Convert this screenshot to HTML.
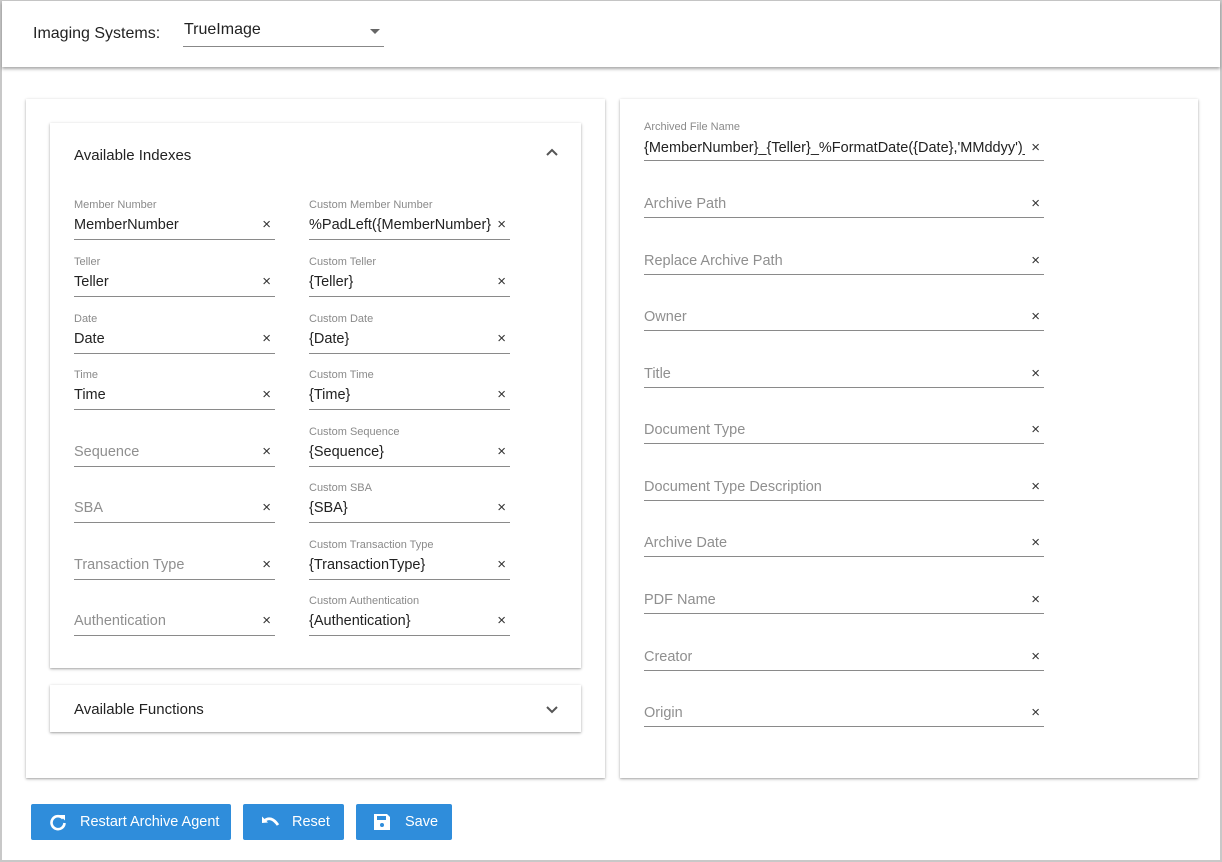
<!DOCTYPE html>
<html><head><meta charset="utf-8"><style>
*{box-sizing:border-box;margin:0;padding:0}
body{width:1222px;height:862px;overflow:hidden;background:#fff;font-family:"Liberation Sans",Arial,sans-serif;position:relative}
.frame{position:absolute;inset:0;border:2px solid #c8c8c8;border-top-width:1px}
.hdr{position:absolute;left:2px;top:1px;width:1218px;height:66px;background:#fff;box-shadow:0 2px 3px rgba(0,0,0,.35)}
.card{position:absolute;background:#fff;box-shadow:0 1px 3px rgba(0,0,0,.3),0 1px 1px rgba(0,0,0,.1)}
.f{position:absolute;height:42px}
.f .l{position:absolute;left:0;top:0;font-size:11px;line-height:12px;color:#8a8a8a;white-space:nowrap}
.f .v{position:absolute;left:0;top:17px;font-size:14.5px;line-height:18px;color:#222;white-space:nowrap;overflow:hidden}
.f .p{color:#8f8f8f}
.f .x{position:absolute;right:4px;top:17px;font-size:15px;line-height:18px;color:#333}
.f .u{position:absolute;left:0;right:0;top:40px;height:1px;background:#8a8a8a}
.btn{position:absolute;top:804px;height:36px;background:#2f8ddb;color:#fff;border-radius:2px;font-size:14.5px;line-height:36px;white-space:nowrap}
.btn svg{position:absolute;top:9px}
</style></head><body>
<div class="frame"></div>
<div class="hdr">
<div style="position:absolute;left:31px;top:24px;font-size:16px;color:#222">Imaging Systems:</div>
<div style="position:absolute;left:182px;top:20px;font-size:16px;color:#222">TrueImage</div>
<div style="position:absolute;left:368px;top:28px;width:0;height:0;border-left:5px solid transparent;border-right:5px solid transparent;border-top:5px solid #666"></div>
<div style="position:absolute;left:181px;top:45px;width:201px;height:1px;background:#888"></div>
</div>

<div class="card" style="left:26px;top:99px;width:579px;height:679px"></div>
<div class="card" style="left:50px;top:123px;width:531px;height:545px">
<div style="position:absolute;left:24px;top:24px;font-size:15px;color:#222">Available Indexes</div>
<svg style="position:absolute;left:495px;top:24px" width="14" height="10"><path d="M2 8 L7 3 L12 8" stroke="#555" stroke-width="2" fill="none"/></svg>
</div>
<div class="card" style="left:50px;top:685px;width:531px;height:47px">
<div style="position:absolute;left:24px;top:16px;font-size:15px;color:#222">Available Functions</div>
<svg style="position:absolute;left:495px;top:19px" width="14" height="10"><path d="M2 3 L7 8 L12 3" stroke="#555" stroke-width="2" fill="none"/></svg>
</div>
<div class="card" style="left:620px;top:99px;width:578px;height:679px"></div>

<!-- left fields -->
<div class="f" style="left:74px;top:199px;width:201px"><div class="l">Member Number</div><div class="v">MemberNumber</div><div class="x">×</div><div class="u"></div></div>
<div class="f" style="left:309px;top:199px;width:201px"><div class="l">Custom Member Number</div><div class="v" style="width:182px">%PadLeft({MemberNumber},</div><div class="x">×</div><div class="u"></div></div>
<div class="f" style="left:74px;top:256px;width:201px"><div class="l">Teller</div><div class="v">Teller</div><div class="x">×</div><div class="u"></div></div>
<div class="f" style="left:309px;top:256px;width:201px"><div class="l">Custom Teller</div><div class="v">{Teller}</div><div class="x">×</div><div class="u"></div></div>
<div class="f" style="left:74px;top:313px;width:201px"><div class="l">Date</div><div class="v">Date</div><div class="x">×</div><div class="u"></div></div>
<div class="f" style="left:309px;top:313px;width:201px"><div class="l">Custom Date</div><div class="v">{Date}</div><div class="x">×</div><div class="u"></div></div>
<div class="f" style="left:74px;top:369px;width:201px"><div class="l">Time</div><div class="v">Time</div><div class="x">×</div><div class="u"></div></div>
<div class="f" style="left:309px;top:369px;width:201px"><div class="l">Custom Time</div><div class="v">{Time}</div><div class="x">×</div><div class="u"></div></div>
<div class="f" style="left:74px;top:426px;width:201px"><div class="v p">Sequence</div><div class="x">×</div><div class="u"></div></div>
<div class="f" style="left:309px;top:426px;width:201px"><div class="l">Custom Sequence</div><div class="v">{Sequence}</div><div class="x">×</div><div class="u"></div></div>
<div class="f" style="left:74px;top:482px;width:201px"><div class="v p">SBA</div><div class="x">×</div><div class="u"></div></div>
<div class="f" style="left:309px;top:482px;width:201px"><div class="l">Custom SBA</div><div class="v">{SBA}</div><div class="x">×</div><div class="u"></div></div>
<div class="f" style="left:74px;top:539px;width:201px"><div class="v p">Transaction Type</div><div class="x">×</div><div class="u"></div></div>
<div class="f" style="left:309px;top:539px;width:201px"><div class="l">Custom Transaction Type</div><div class="v">{TransactionType}</div><div class="x">×</div><div class="u"></div></div>
<div class="f" style="left:74px;top:595px;width:201px"><div class="v p">Authentication</div><div class="x">×</div><div class="u"></div></div>
<div class="f" style="left:309px;top:595px;width:201px"><div class="l">Custom Authentication</div><div class="v">{Authentication}</div><div class="x">×</div><div class="u"></div></div>

<!-- right fields -->
<div class="f" style="left:644px;top:121px;width:400px"><div class="l">Archived File Name</div><div class="v" style="top:18px;width:381px">{MemberNumber}_{Teller}_%FormatDate({Date},'MMddyy')_{Time}</div><div class="x" style="top:18px">×</div><div class="u" style="top:39px"></div></div>
<div class="f" style="left:644px;top:178px;width:400px"><div class="v p" style="top:17px">Archive Path</div><div class="x">×</div><div class="u" style="top:39px"></div></div>
<div class="f" style="left:644px;top:235px;width:400px"><div class="v p">Replace Archive Path</div><div class="x">×</div><div class="u" style="top:39px"></div></div>
<div class="f" style="left:644px;top:291px;width:400px"><div class="v p">Owner</div><div class="x">×</div><div class="u" style="top:39px"></div></div>
<div class="f" style="left:644px;top:348px;width:400px"><div class="v p">Title</div><div class="x">×</div><div class="u" style="top:39px"></div></div>
<div class="f" style="left:644px;top:404px;width:400px"><div class="v p">Document Type</div><div class="x">×</div><div class="u" style="top:39px"></div></div>
<div class="f" style="left:644px;top:461px;width:400px"><div class="v p">Document Type Description</div><div class="x">×</div><div class="u" style="top:39px"></div></div>
<div class="f" style="left:644px;top:517px;width:400px"><div class="v p">Archive Date</div><div class="x">×</div><div class="u" style="top:39px"></div></div>
<div class="f" style="left:644px;top:574px;width:400px"><div class="v p">PDF Name</div><div class="x">×</div><div class="u" style="top:39px"></div></div>
<div class="f" style="left:644px;top:631px;width:400px"><div class="v p">Creator</div><div class="x">×</div><div class="u" style="top:39px"></div></div>
<div class="f" style="left:644px;top:687px;width:400px"><div class="v p">Origin</div><div class="x">×</div><div class="u" style="top:39px"></div></div>

<!-- buttons -->
<div class="btn" style="left:31px;width:200px">
<svg style="left:18px" width="18" height="18" viewBox="0 0 18 18"><path d="M14 5.5 A6.5 6.5 0 1 0 15.5 10" stroke="#fff" stroke-width="2.6" fill="none"/><path d="M10.5 2 L16 2 L16 7.5 Z" fill="#fff"/></svg>
<span style="position:absolute;left:49px">Restart Archive Agent</span></div>
<div class="btn" style="left:243px;width:101px">
<svg style="left:16px" width="22" height="18" viewBox="0 0 22 18"><path d="M3 9 L3 4 L7.5 8.5" fill="#fff"/><path d="M3 10 L3 3.5 L9 9.5 Z" fill="#fff"/><path d="M5 8 Q12 2 19 12" stroke="#fff" stroke-width="2.8" fill="none"/></svg>
<span style="position:absolute;left:49px">Reset</span></div>
<div class="btn" style="left:356px;width:96px">
<svg style="left:17px" width="18" height="18" viewBox="0 0 18 18"><path d="M1 1 H14 L17 4 V17 H1 Z" fill="#fff"/><rect x="4" y="3" width="9" height="4" fill="#2f8ddb"/><circle cx="9" cy="12" r="2" fill="#2f8ddb"/></svg>
<span style="position:absolute;left:49px">Save</span></div>
</body></html>
